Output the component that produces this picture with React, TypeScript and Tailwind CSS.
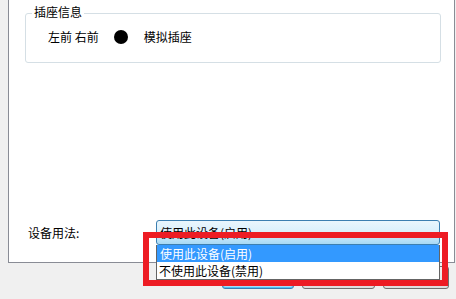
import React from "react";

const FONT = { fontFamily: '"Microsoft YaHei", "Noto Sans CJK SC", "Noto Sans", sans-serif' };

function Button({ w, primary }: { w: string; primary?: boolean }) {
  return (
    <div
      className={`${w} h-[23px] rounded-[3px] border ${
        primary
          ? "border-[#3c7fb1] bg-gradient-to-b from-[#eaf6fd] to-[#a7d9f5] shadow-[inset_0_0_0_1px_#4fc3f7]"
          : "border-[#707070] bg-gradient-to-b from-[#f2f2f2] to-[#dddddd]"
      }`}
    />
  );
}

export default function App() {
  return (
    <div
      className="relative h-[299px] w-[456px] overflow-hidden bg-[#f0f0f0] text-[12px] leading-none text-black"
      style={FONT}
    >
      {/* property page */}
      <div className="ml-[8px] flex h-[263px] w-[447px] flex-col border-b border-l border-r border-[#898c95] bg-white">
        <div className="relative ml-[16px] mt-[13px] h-[50px] w-[416px] rounded-[3px] border border-[#d5dfe5]">
          <span className="absolute -top-[8px] left-[6px] bg-white px-[2px]">插座信息</span>
          <div className="flex items-center pl-[22px] pt-[16px]">
            <span>左前 右前</span>
            <span className="ml-[15px] h-[14px] w-[14px] rounded-full bg-black" />
            <span className="ml-[16px]">模拟插座</span>
          </div>
        </div>

        <div className="mt-[157px] flex items-center">
          <span className="ml-[19px] w-[128px]">设备用法:</span>
          <div className="flex h-[25px] w-[284px] items-center justify-between rounded-[3px] border border-[#3c7fb1] bg-gradient-to-b from-[#eaf6fd] via-[#d9f0fc] to-[#a7d9f5] pl-[3px] pr-[5px]">
            <span>使用此设备(启用)</span>
            <span className="mt-[4px] border-x-[4px] border-t-[4px] border-x-transparent border-t-black" />
          </div>
        </div>
      </div>

      {/* dialog buttons */}
      <div className="ml-[222px] mt-[3px] flex gap-[8px]">
        <Button w="w-[72px]" primary />
        <Button w="w-[73px]" />
        <Button w="w-[66px]" />
      </div>

      {/* open dropdown list */}
      <div className="absolute left-[156px] top-[245px] w-[284px] border border-t-0 border-[#646464] bg-white">
        <div className="flex h-[17px] items-center bg-[#3399ff] pl-[3px] text-white">使用此设备(启用)</div>
        <div className="flex h-[17px] items-center pl-[2px]">不使用此设备(禁用)</div>
      </div>

      {/* red highlight */}
      <div className="absolute left-[143px] top-[232px] h-[54px] w-[305px] border-[6px] border-[#ed1c24]" />
    </div>
  );
}
